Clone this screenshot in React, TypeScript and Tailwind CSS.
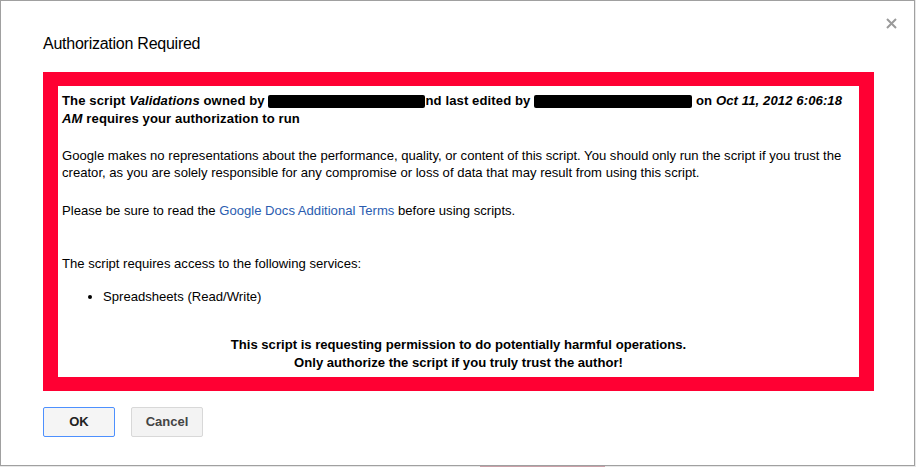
const App = (): JSX.Element => {
  return (
    <div className="w-[916px] h-[467px] bg-[#e8e8e8] relative overflow-hidden font-['Liberation_Sans',Arial,sans-serif] text-black">
      <div className="w-[915px] h-[466px] bg-white border border-[#a0a0a0] flex flex-col">
        {/* header */}
        <div className="flex items-start justify-between pl-[42px] pr-[17px] pt-[14px]">
          <h1 className="mt-[19px] text-[16px] leading-[20px] tracking-[-0.25px]">Authorization Required</h1>
          <svg width="11" height="11" viewBox="0 0 11 11" className="mt-[3px]">
            <path d="M1 1 L10 10 M10 1 L1 10" stroke="#9a9a9a" strokeWidth="2" />
          </svg>
        </div>

        {/* red frame */}
        <div className="ml-[42px] mt-[18px] w-[831px] border-[15px] border-[#ff0033] border-t-[14px] border-b-[14px]">
          <div className="bg-white h-[291px] px-[4px] pt-[6px] text-[13.1px] leading-[17px]">
            <p className="font-bold leading-[18px] tracking-[0.1px]">
              The script <i>Validations</i> owned by{' '}
              <span className="inline-block align-middle w-[157px] h-[13px] bg-black rounded-[2px]"></span>
              nd last edited by{' '}
              <span className="inline-block align-middle w-[158px] h-[13px] bg-black rounded-[2px]"></span>{' '}
              on <i>Oct 11, 2012 6:06:18 AM</i> requires your authorization to run
            </p>
            <p className="mt-[19px]">
              Google makes no representations about the performance, quality, or content of this script. You should
              only run the script if you trust the creator, as you are solely responsible for any compromise or loss
              of data that may result from using this script.
            </p>
            <p className="mt-[21px]">
              Please be sure to read the <a className="text-[#2a5db0]">Google Docs Additional Terms</a> before using
              scripts.
            </p>
            <p className="mt-[36px]">The script requires access to the following services:</p>
            <ul className="mt-[16px] pl-[41px] list-disc">
              <li>Spreadsheets (Read/Write)</li>
            </ul>
            <div className="mt-[31px] text-center font-bold leading-[18px]">
              <p>This script is requesting permission to do potentially harmful operations.</p>
              <p>Only authorize the script if you truly trust the author!</p>
            </div>
          </div>
        </div>

        {/* buttons */}
        <div className="flex gap-[16px] pl-[42px] mt-[16px]">
          <button className="w-[72px] h-[30px] rounded-[2px] border border-[#4d90fe] bg-[#f5f5f5] text-[13px] font-bold text-[#222]">
            OK
          </button>
          <button className="w-[72px] h-[30px] rounded-[2px] border border-[#d8d8d8] bg-[#f3f3f3] text-[13px] font-bold text-[#444]">
            Cancel
          </button>
        </div>
      </div>
      <div className="absolute left-[480px] top-[466px] w-[125px] h-[1px] bg-[#c9a0a8]"></div>
    </div>
  );
};

export default App;
